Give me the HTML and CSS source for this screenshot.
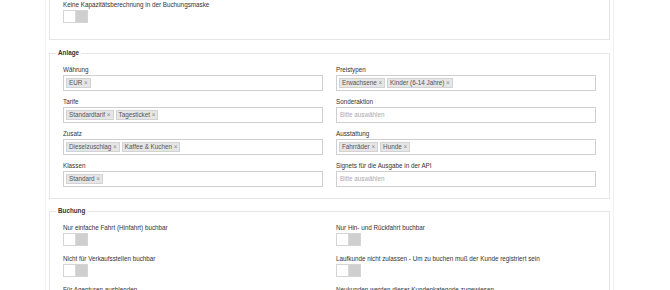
FILE: index.html
```html
<!DOCTYPE html>
<html lang="de">
<head>
  <meta charset="UTF-8" />
  <meta name="viewport" content="width=device-width, initial-scale=1.0"/>
  <title>Angebot bearbeiten</title>
  <link rel="stylesheet" href="styles.css">
</head>
<body>
  <div class="page">

    <fieldset class="box cut">
      <div class="field">
        <label>Keine Kapazitätsberechnung in der Buchungsmaske</label>
        <span class="switch"><span class="knob"></span></span>
      </div>
    </fieldset>

    <fieldset class="box">
      <legend>Anlage</legend>
      <div class="cols">
        <div class="field">
          <label>Währung</label>
          <div class="select">
            <span class="tag">EUR <i>×</i></span>
          </div>
        </div>
        <div class="field">
          <label>Preistypen</label>
          <div class="select">
            <span class="tag">Erwachsene <i>×</i></span>
            <span class="tag">Kinder (6-14 Jahre) <i>×</i></span>
          </div>
        </div>
        <div class="field">
          <label>Tarife</label>
          <div class="select">
            <span class="tag">Standardtarif <i>×</i></span>
            <span class="tag">Tagesticket <i>×</i></span>
          </div>
        </div>
        <div class="field">
          <label>Sonderaktion</label>
          <div class="select"><span class="placeholder">Bitte auswählen</span></div>
        </div>
        <div class="field">
          <label>Zusatz</label>
          <div class="select">
            <span class="tag">Dieselzuschlag <i>×</i></span>
            <span class="tag">Kaffee &amp; Kuchen <i>×</i></span>
          </div>
        </div>
        <div class="field">
          <label>Ausstattung</label>
          <div class="select">
            <span class="tag">Fahrräder <i>×</i></span>
            <span class="tag">Hunde <i>×</i></span>
          </div>
        </div>
        <div class="field">
          <label>Klassen</label>
          <div class="select">
            <span class="tag">Standard <i>×</i></span>
          </div>
        </div>
        <div class="field">
          <label>Signets für die Ausgabe in der API</label>
          <div class="select"><span class="placeholder">Bitte auswählen</span></div>
        </div>
      </div>
    </fieldset>

    <fieldset class="box">
      <legend>Buchung</legend>
      <div class="cols">
        <div class="field">
          <label>Nur einfache Fahrt (Hinfahrt) buchbar</label>
          <span class="switch"><span class="knob"></span></span>
        </div>
        <div class="field">
          <label>Nur Hin- und Rückfahrt buchbar</label>
          <span class="switch"><span class="knob"></span></span>
        </div>
        <div class="field">
          <label>Nicht für Verkaufsstellen buchbar</label>
          <span class="switch"><span class="knob"></span></span>
        </div>
        <div class="field">
          <label>Laufkunde nicht zulassen - Um zu buchen muß der Kunde registriert sein</label>
          <span class="switch"><span class="knob"></span></span>
        </div>
        <div class="field">
          <label>Für Agenturen ausblenden</label>
          <span class="switch"><span class="knob"></span></span>
        </div>
        <div class="field">
          <label>Neukunden werden dieser Kundenkategorie zugewiesen</label>
          <span class="switch"><span class="knob"></span></span>
        </div>
      </div>
    </fieldset>

  </div>
</body>
</html>
```

FILE: styles.css
```css
html, body {
  margin: 0;
  background: #fff;
}

body {
  font-family: 'Liberation Sans', Arial, sans-serif;
  font-size: 6.3px;
  color: #333;
}

.page {
  margin-left: 45px;
  width: 561px;
  padding: 0 3px;
  border-left: 1px solid #f3f3f3;
  border-right: 1px solid #f0f0f0;
  min-height: 290px;
}

.box {
  margin: 0 0 7px;
  padding: 8px 13px 4px;
  border: 1px solid #e6e6e6;
  min-width: 0;
}

.box.cut {
  border-top: none;
  padding-top: 1px;
  padding-bottom: 7px;
  margin-bottom: 8px;
}

.box legend {
  margin-left: -7px;
  padding: 0 2px;
  font-weight: bold;
  line-height: 10px;
  color: #333;
}

.cols {
  display: grid;
  grid-template-columns: 1fr 1fr;
  column-gap: 13px;
}

.field {
  margin-bottom: 7px;
}

.field label {
  display: block;
  line-height: 8px;
  margin-bottom: 1px;
  white-space: nowrap;
}

.select {
  box-sizing: border-box;
  height: 16px;
  border: 1px solid #cfcfcf;
  background: #fff;
  padding: 2px 2px;
  display: flex;
  gap: 2px;
  align-items: flex-start;
}

.tag {
  display: inline-block;
  line-height: 8px;
  padding: 0 2px;
  border: 1px solid #d2d2d2;
  background: #e6e6e6;
  color: #555;
  white-space: nowrap;
}

.tag i {
  font-style: normal;
  color: #888;
}

.placeholder {
  color: #aaa;
  line-height: 9px;
  padding-left: 1px;
}

.switch {
  display: flex;
  box-sizing: border-box;
  width: 25px;
  height: 13px;
  border: 1px solid #d4d4d4;
  background: #cfcfcf;
}

.knob {
  width: 11px;
  background: #fff;
  border-right: 1px solid #d9d9d9;
}

.field:has(.switch) {
  margin-bottom: 9px;
}
```
